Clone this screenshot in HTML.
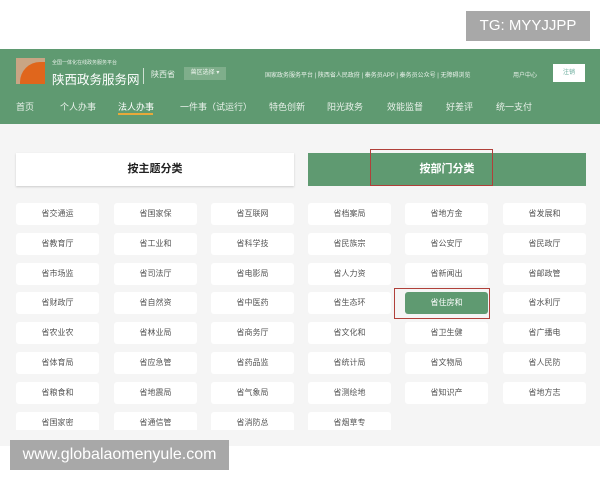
<!DOCTYPE html>
<html><head><meta charset="utf-8"><style>
*{margin:0;padding:0;box-sizing:border-box}
body{width:600px;height:480px;background:#fff;position:relative;overflow:hidden;font-family:"Liberation Sans","Noto Sans CJK SC",sans-serif}
.a{position:absolute;white-space:nowrap}
.hd{position:absolute;left:0;top:49px;width:600px;height:75px;background:#5f9a71;color:#e9f1ea}
.ct{position:absolute;left:0;top:124px;width:600px;height:322px;background:#f5f5f5}
.c{position:absolute;width:83px;height:22px;background:#fff;border-radius:3px;font-size:8px;color:#555;text-align:center;line-height:22px}
</style></head><body>
<div class="a" style="left:466px;top:11px;width:124px;height:30px;background:#a8a8a8;color:#fff;font-size:15px;line-height:30px;text-align:center">TG: MYYJJPP</div>
<div class="hd">
<div class="a" style="left:16px;top:9px;width:29px;height:26px;background:#c9a584"></div>
<div class="a" style="left:20px;top:13px;width:25px;height:22px;background:#e0661c;border-radius:20px 0 0 0"></div>
<div class="a" style="left:52px;top:10px;font-size:5px">全国一体化在线政务服务平台</div>
<div class="a" style="left:52px;top:20px;font-size:12.5px;color:#fff">陕西政务服务网</div>
<div class="a" style="left:143px;top:19px;width:1px;height:16px;background:#cfe0d3"></div>
<div class="a" style="left:151px;top:20px;font-size:8px">陕西省</div>
<div class="a" style="left:184px;top:18px;width:42px;height:13px;background:#7fae8b;font-size:6px;line-height:13px;text-align:center">兽区选择 ▾</div>
<div class="a" style="left:265px;top:21px;font-size:6px">国家政务服务平台 | 陕西省人民政府 | 秦务员APP | 秦务员公众号 | 无障碍浏览</div>
<div class="a" style="left:513px;top:21px;font-size:6px">用户中心</div>
<div class="a" style="left:553px;top:15px;width:32px;height:18px;background:#fff;color:#6a9;font-size:6px;line-height:18px;text-align:center">注销</div>
<div class="a" style="left:16px;top:51px;font-size:9px">首页</div>
<div class="a" style="left:60px;top:51px;font-size:9px">个人办事</div>
<div class="a" style="left:118px;top:51px;font-size:9px;color:#fff">法人办事</div>
<div class="a" style="left:118px;top:64px;width:35px;height:2px;background:#e8a93a"></div>
<div class="a" style="left:180px;top:51px;font-size:9px">一件事（试运行）</div>
<div class="a" style="left:269px;top:51px;font-size:9px">特色创新</div>
<div class="a" style="left:327px;top:51px;font-size:9px">阳光政务</div>
<div class="a" style="left:387px;top:51px;font-size:9px">效能监督</div>
<div class="a" style="left:446px;top:51px;font-size:9px">好差评</div>
<div class="a" style="left:496px;top:51px;font-size:9px">统一支付</div>
</div>
<div class="ct"></div>
<div class="a" style="left:16px;top:153px;width:278px;height:33px;background:#fff;box-shadow:0 1px 2px #ccc;font-size:11px;font-weight:bold;color:#222;text-align:center;line-height:33px">按主题分类</div>
<div class="a" style="left:308px;top:153px;width:278px;height:33px;background:#5f9a71;font-size:11px;font-weight:bold;color:#fff;text-align:center;line-height:33px">按部门分类</div>
<div class="a" style="left:370px;top:149px;width:123px;height:37px;border:1.5px solid #b0403a"></div>
<div id="g"></div>
<script>
var n=[["省交通运","省国家保","省互联网","省档案局","省地方金","省发展和"],["省教育厅","省工业和","省科学技","省民族宗","省公安厅","省民政厅"],["省市场监","省司法厅","省电影局","省人力资","省新闻出","省邮政管"],["省财政厅","省自然资","省中医药","省生态环","省住房和","省水利厅"],["省农业农","省林业局","省商务厅","省文化和","省卫生健","省广播电"],["省体育局","省应急管","省药品监","省统计局","省文物局","省人民防"],["省粮食和","省地震局","省气象局","省测绘地","省知识产","省地方志"],["省国家密","省通信管","省消防总","省烟草专"]];
var xs=[16,114,211,308,405,503],h="";
for(var r=0;r<8;r++)for(var c=0;c<n[r].length;c++){var y=203+r*29.8;var hl=(r==3&&c==4);
h+='<div class="c" style="left:'+xs[c]+'px;top:'+y+'px;'+(hl?'background:#5f9a71;color:#fff;':'')+(r==7?'height:18px;border-radius:3px 3px 0 0;':'')+'">'+n[r][c]+'</div>';}
document.getElementById('g').innerHTML=h;
</script>
<div class="a" style="left:394px;top:288px;width:96px;height:31px;border:1.5px solid #b0403a"></div>
<div class="a" style="left:10px;top:440px;width:219px;height:30px;background:#a8a8a8;color:#fff;font-size:16px;line-height:30px;text-align:center">www.globalaomenyule.com</div>
</body></html>
